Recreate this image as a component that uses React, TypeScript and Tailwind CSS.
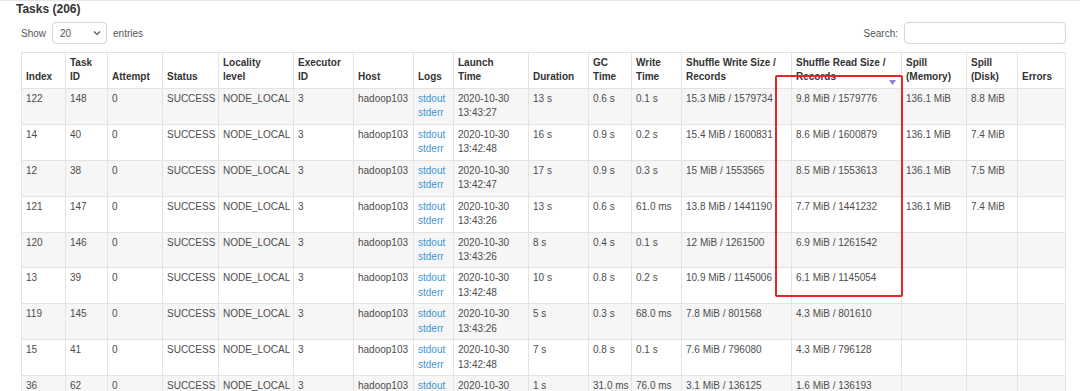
import React from "react";

type Row = string[];

const cols = [44, 42, 55, 56, 75, 60, 60, 40, 75, 60, 43, 50, 110, 110, 65, 51, 48];

const headers: string[][] = [
  ["Index"],
  ["Task", "ID"],
  ["Attempt"],
  ["Status"],
  ["Locality", "level"],
  ["Executor", "ID"],
  ["Host"],
  ["Logs"],
  ["Launch", "Time"],
  ["Duration"],
  ["GC", "Time"],
  ["Write", "Time"],
  ["Shuffle Write Size /", "Records"],
  ["Shuffle Read Size /", "Records"],
  ["Spill", "(Memory)"],
  ["Spill", "(Disk)"],
  ["Errors"],
];

const rows: Row[] = [
  ["122", "148", "0", "13:43:27", "13 s", "0.6 s", "0.1 s", "15.3 MiB / 1579734", "9.8 MiB / 1579776", "136.1 MiB", "8.8 MiB"],
  ["14", "40", "0", "13:42:48", "16 s", "0.9 s", "0.2 s", "15.4 MiB / 1600831", "8.6 MiB / 1600879", "136.1 MiB", "7.4 MiB"],
  ["12", "38", "0", "13:42:47", "17 s", "0.9 s", "0.3 s", "15 MiB / 1553565", "8.5 MiB / 1553613", "136.1 MiB", "7.5 MiB"],
  ["121", "147", "0", "13:43:26", "13 s", "0.6 s", "61.0 ms", "13.8 MiB / 1441190", "7.7 MiB / 1441232", "136.1 MiB", "7.4 MiB"],
  ["120", "146", "0", "13:43:26", "8 s", "0.4 s", "0.1 s", "12 MiB / 1261500", "6.9 MiB / 1261542", "", ""],
  ["13", "39", "0", "13:42:48", "10 s", "0.8 s", "0.2 s", "10.9 MiB / 1145006", "6.1 MiB / 1145054", "", ""],
  ["119", "145", "0", "13:43:26", "5 s", "0.3 s", "68.0 ms", "7.8 MiB / 801568", "4.3 MiB / 801610", "", ""],
  ["15", "41", "0", "13:42:48", "7 s", "0.8 s", "0.1 s", "7.6 MiB / 796080", "4.3 MiB / 796128", "", ""],
  ["36", "62", "0", "13:42:48", "1 s", "31.0 ms", "76.0 ms", "3.1 MiB / 136125", "1.6 MiB / 136193", "", ""],
];

const td = "border border-[#e3e3e3] px-[4px] py-[3px] align-top whitespace-nowrap";

export default function App() {
  return (
    <div
      className="w-[1080px] h-[391px] overflow-hidden bg-white border-t border-[#e6e6e6] text-[#4d4d4d]"
      style={{ fontFamily: '"Liberation Sans", Arial, sans-serif' }}
    >
      <div className="pl-[16px] text-[12px] leading-[16px] font-bold text-[#333]">
        Tasks (206)
      </div>
      <div className="pl-[21px] pr-[15px]">
        <div className="flex items-center justify-between mt-[5px] h-[22px] text-[10px]">
          <div className="flex items-center gap-[6px] text-[#555]">
            <span>Show</span>
            <div className="w-[55px] h-[22px] border border-[#d4d4d4] rounded-[4px] flex items-center justify-between pl-[7px] pr-[5px] text-[#555]">
              <span>20</span>
              <svg width="8" height="6" viewBox="0 0 8 6">
                <path d="M1 1.5 L4 4.5 L7 1.5" fill="none" stroke="#555" strokeWidth="1.2" />
              </svg>
            </div>
            <span>entries</span>
          </div>
          <div className="flex items-center gap-[6px] text-[#555]">
            <span>Search:</span>
            <div className="w-[162px] h-[22px] border border-[#d4d4d4] rounded-[4px] mr-[-1px]" />
          </div>
        </div>
        <div className="relative mt-[8px]">
          <table className="table-fixed border-collapse w-[1044px] text-[10px] leading-[14.45px]">
            <colgroup>
              {cols.map((w, i) => (
                <col key={i} style={{ width: w }} />
              ))}
            </colgroup>
            <thead>
              <tr className="bg-white">
                {headers.map((h, i) => (
                  <th
                    key={i}
                    className="relative border border-[#e3e3e3] px-[4px] py-[3px] align-bottom text-left font-bold text-[#333] whitespace-nowrap"
                  >
                    {h.map((l, j) => (
                      <div key={j}>{l}</div>
                    ))}
                    {i === 13 && (
                      <svg
                        className="absolute right-[5px] bottom-[3px]"
                        width="7"
                        height="5"
                        viewBox="0 0 7 5"
                      >
                        <path d="M0 0 H7 L3.5 5 Z" fill="#8585d6" />
                      </svg>
                    )}
                  </th>
                ))}
              </tr>
            </thead>
            <tbody>
              {rows.map((r, i) => (
                <tr key={i} className={i % 2 === 0 ? "bg-[#f6f6f6]" : "bg-white"}>
                  <td className={td}>{r[0]}</td>
                  <td className={td}>{r[1]}</td>
                  <td className={td}>{r[2]}</td>
                  <td className={td}>SUCCESS</td>
                  <td className={td}>NODE_LOCAL</td>
                  <td className={td}>3</td>
                  <td className={td}>hadoop103</td>
                  <td className={td}>
                    <div className="text-[#3d95d3]">stdout</div>
                    <div className="text-[#3d95d3]">stderr</div>
                  </td>
                  <td className={td}>
                    <div>2020-10-30</div>
                    <div>{r[3]}</div>
                  </td>
                  <td className={td}>{r[4]}</td>
                  <td className={td}>{r[5]}</td>
                  <td className={td}>{r[6]}</td>
                  <td className={td}>{r[7]}</td>
                  <td className={td}>{r[8]}</td>
                  <td className={td}>{r[9]}</td>
                  <td className={td}>{r[10]}</td>
                  <td className={td}></td>
                </tr>
              ))}
            </tbody>
          </table>
          <div className="absolute left-[754px] top-[23px] w-[128px] h-[222px] border-2 border-[#e8242a] rounded-[2px] pointer-events-none" />
        </div>
      </div>
    </div>
  );
}
